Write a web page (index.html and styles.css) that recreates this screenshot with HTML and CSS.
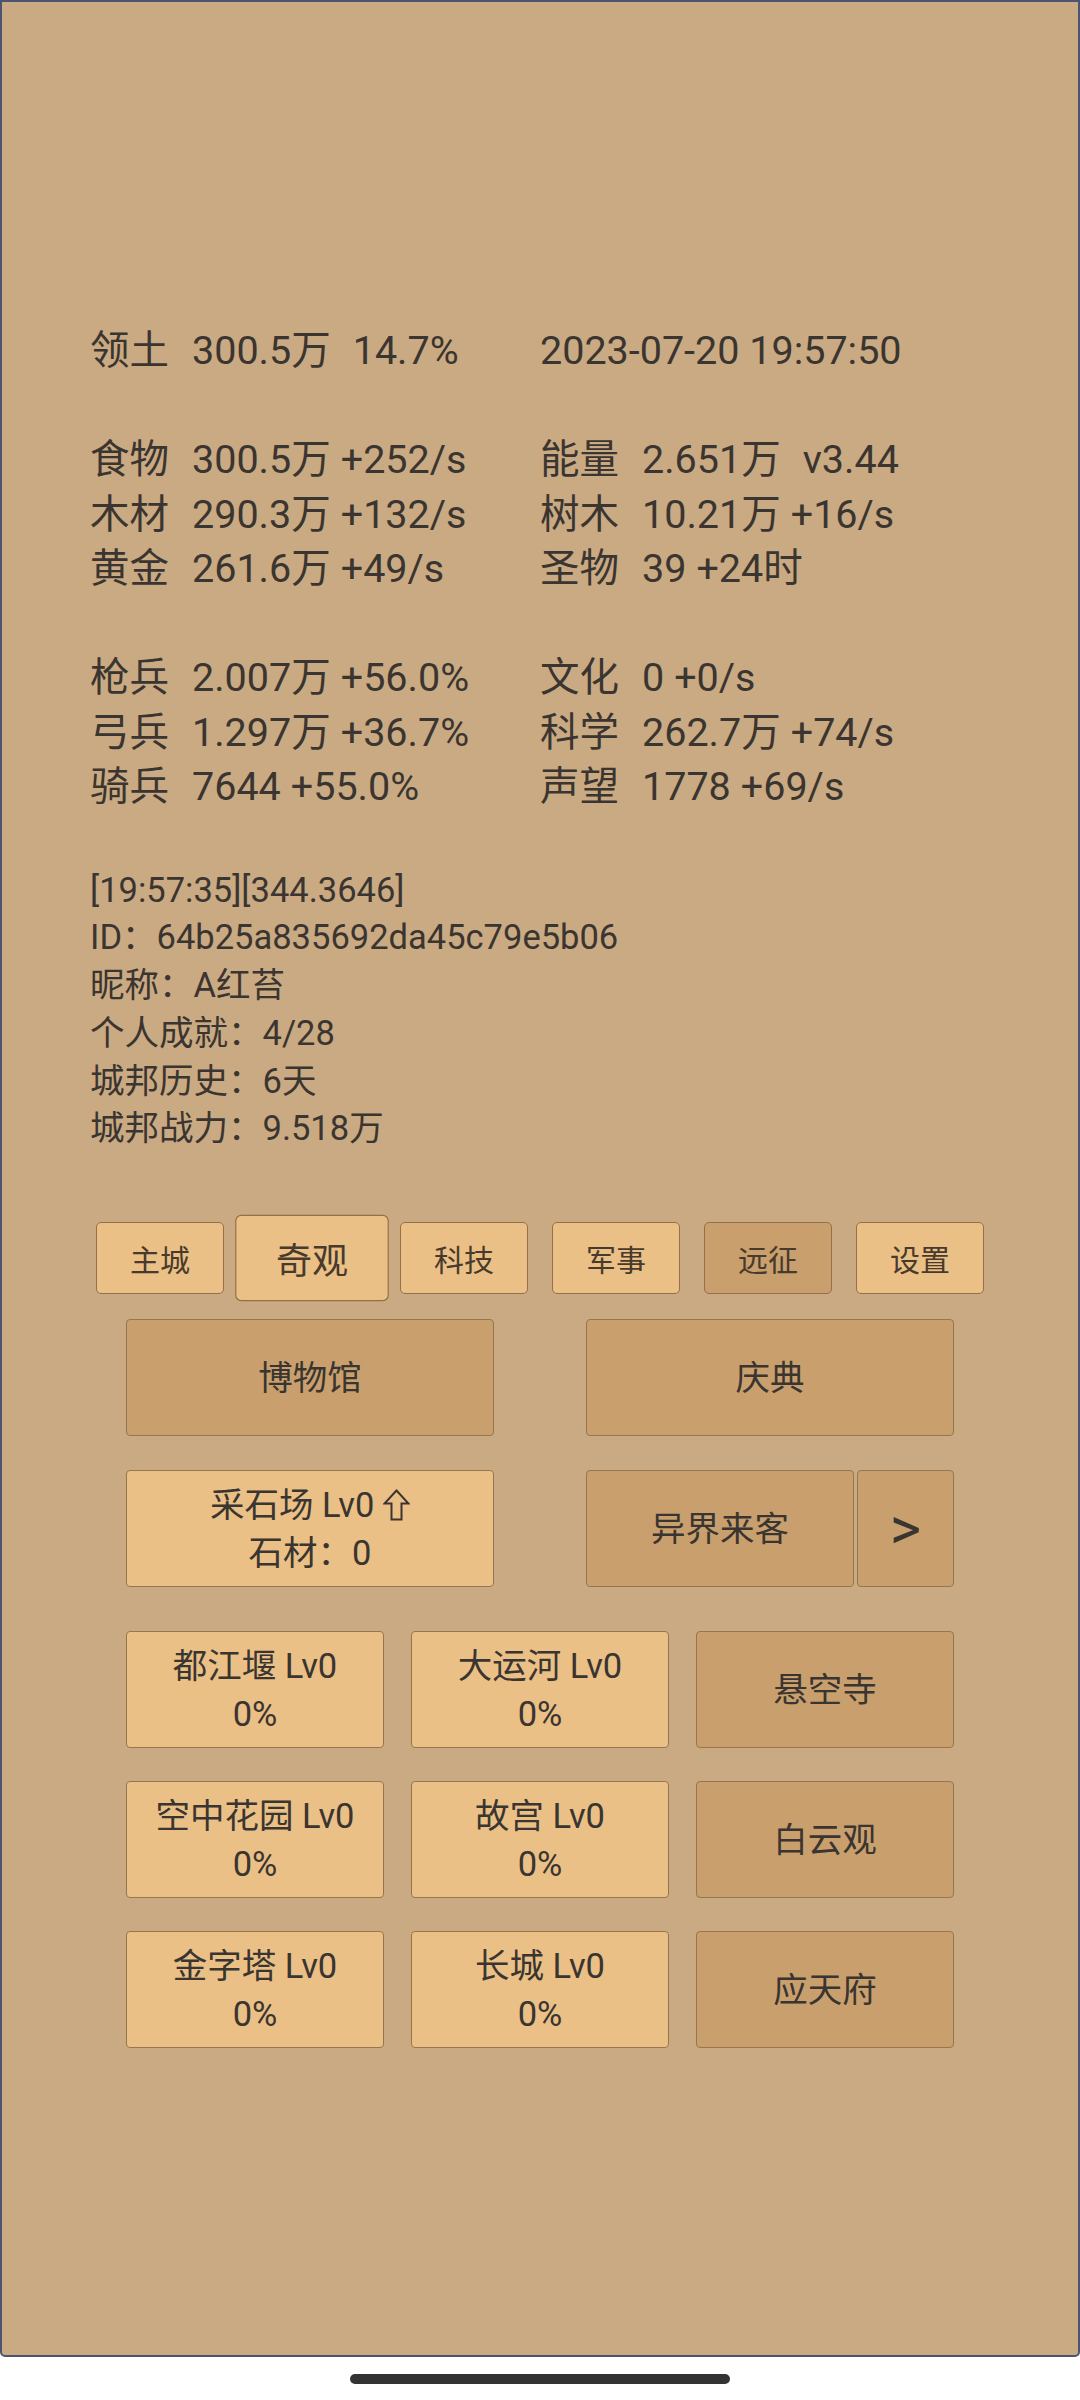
FILE: index.html
```html
<!DOCTYPE html>
<html lang="zh-CN">
<head>
    <meta charset="UTF-8">
    <meta name="viewport" content="width=device-width, initial-scale=1.0">
    <title>城邦</title>
    <link rel="stylesheet" href="styles.css">
</head>
<body>
    <div class="screen">
        <div class="stats">
            <div class="group">
                <div class="row">
                    <div class="cell"><span class="label">领土</span>300.5万<span class="wide">14.7%</span></div>
                    <div class="cell">2023-07-20 19:57:50</div>
                </div>
            </div>
            <div class="group">
                <div class="row">
                    <div class="cell"><span class="label">食物</span>300.5万<span class="rate">+252/s</span></div>
                    <div class="cell"><span class="label">能量</span>2.651万<span class="wide">v3.44</span></div>
                </div>
                <div class="row">
                    <div class="cell"><span class="label">木材</span>290.3万<span class="rate">+132/s</span></div>
                    <div class="cell"><span class="label">树木</span>10.21万<span class="rate">+16/s</span></div>
                </div>
                <div class="row">
                    <div class="cell"><span class="label">黄金</span>261.6万<span class="rate">+49/s</span></div>
                    <div class="cell"><span class="label">圣物</span>39<span class="rate">+24时</span></div>
                </div>
            </div>
            <div class="group">
                <div class="row">
                    <div class="cell"><span class="label">枪兵</span>2.007万<span class="rate">+56.0%</span></div>
                    <div class="cell"><span class="label">文化</span>0<span class="rate">+0/s</span></div>
                </div>
                <div class="row">
                    <div class="cell"><span class="label">弓兵</span>1.297万<span class="rate">+36.7%</span></div>
                    <div class="cell"><span class="label">科学</span>262.7万<span class="rate">+74/s</span></div>
                </div>
                <div class="row">
                    <div class="cell"><span class="label">骑兵</span>7644<span class="rate">+55.0%</span></div>
                    <div class="cell"><span class="label">声望</span>1778<span class="rate">+69/s</span></div>
                </div>
            </div>
        </div>

        <div class="info">
            <div>[19:57:35][344.3646]</div>
            <div>ID：64b25a835692da45c79e5b06</div>
            <div>昵称：A红苔</div>
            <div>个人成就：4/28</div>
            <div>城邦历史：6天</div>
            <div>城邦战力：9.518万</div>
        </div>

        <div class="tabs">
            <div class="tab">主城</div>
            <div class="tab active">奇观</div>
            <div class="tab">科技</div>
            <div class="tab">军事</div>
            <div class="tab dark">远征</div>
            <div class="tab">设置</div>
        </div>

        <div class="pair">
            <div class="btn dark">博物馆</div>
            <div class="btn dark">庆典</div>
        </div>
        <div class="pair">
            <div class="btn">
                <div>采石场 Lv0 <svg class="up" width="27" height="32" viewBox="0 0 27 32"><path d="M13.5 1.5 L25.5 14.5 L18.5 14.5 L18.5 30.5 L8.5 30.5 L8.5 14.5 L1.5 14.5 Z" fill="none" stroke="#3a3530" stroke-width="2" stroke-linejoin="miter"/></svg></div>
                <div>石材：0</div>
            </div>
            <div class="split">
                <div class="btn dark grow">异界来客</div>
                <div class="btn dark next">&gt;</div>
            </div>
        </div>

        <div class="wonders">
            <div class="btn"><div>都江堰 Lv0</div><div>0%</div></div>
            <div class="btn"><div>大运河 Lv0</div><div>0%</div></div>
            <div class="btn dark">悬空寺</div>
            <div class="btn"><div>空中花园 Lv0</div><div>0%</div></div>
            <div class="btn"><div>故宫 Lv0</div><div>0%</div></div>
            <div class="btn dark">白云观</div>
            <div class="btn"><div>金字塔 Lv0</div><div>0%</div></div>
            <div class="btn"><div>长城 Lv0</div><div>0%</div></div>
            <div class="btn dark">应天府</div>
        </div>
    </div>
    <div class="home-bar"></div>
</body>
</html>
```

FILE: styles.css
```css
body {
    margin: 0;
    background-color: #fff;
    font-family: Roboto, "Noto Sans CJK SC", sans-serif;
    color: #3a3530;
}
.screen {
    height: 2357px;
    box-sizing: border-box;
    border: 2px solid #4d5372;
    border-radius: 0 0 5px 5px;
    background-color: #caaa82;
    overflow: hidden;
}
.stats {
    padding: 322px 0 0 88px;
    font-size: 39.5px;
    line-height: 54.5px;
}
.group {
    margin-bottom: 54.5px;
}
.group:last-child {
    margin-bottom: 0;
}
.row {
    display: grid;
    grid-template-columns: 450px auto;
}
.cell {
    white-space: nowrap;
}
.label {
    display: inline-block;
    width: 102px;
}
.rate {
    margin-left: 10px;
}
.wide {
    margin-left: 22px;
}
.info {
    margin-top: 52px;
    padding-left: 88px;
    font-size: 34.5px;
    line-height: 47.8px;
}
.tabs {
    display: flex;
    justify-content: center;
    gap: 24px;
    margin-top: 69px;
}
.tab {
    width: 128px;
    height: 72px;
    box-sizing: border-box;
    display: flex;
    align-items: center;
    justify-content: center;
    border: 1.5px solid #94704a;
    border-radius: 5px;
    background-color: #ebc086;
    font-size: 30px;
    color: #483a2c;
}
.tab.active {
    transform: scale(1.2);
}
.tab.dark {
    background-color: #c9a06d;
}
.pair {
    width: 828px;
    margin: 25px auto 0;
    display: flex;
    justify-content: space-between;
}
.pair + .pair {
    margin-top: 34px;
}
.btn {
    height: 117px;
    box-sizing: border-box;
    display: flex;
    flex-direction: column;
    align-items: center;
    justify-content: center;
    border: 1.5px solid #97764f;
    border-radius: 4px;
    background-color: #ebc086;
    font-size: 34.5px;
    line-height: 48px;
    text-align: center;
}
.pair > .btn {
    width: 368px;
}
.btn.dark {
    background-color: #c9a06d;
}
.split {
    width: 368px;
    display: flex;
    gap: 3px;
}
.grow {
    flex: 1;
}
.next {
    width: 97px;
    font-size: 60px;
}
.up {
    vertical-align: -4px;
}
.wonders {
    width: 828px;
    margin: 44px auto 0;
    display: grid;
    grid-template-columns: repeat(3, 1fr);
    column-gap: 27px;
    row-gap: 33px;
}
.home-bar {
    width: 380px;
    height: 10px;
    margin: 17px auto 0;
    border-radius: 5px;
    background-color: #333;
}
```
